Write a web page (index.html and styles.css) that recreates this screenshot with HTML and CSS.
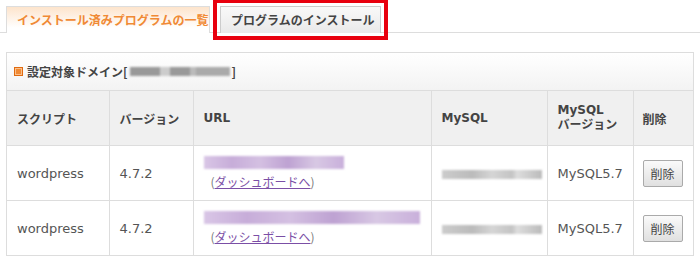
FILE: index.html
```html
<!DOCTYPE html>
<html lang="ja">
<head>
    <meta charset="UTF-8">
    <title>プログラムのインストール</title>
    <link rel="stylesheet" href="styles.css">
</head>
<body>
    <div class="tabs">
        <div class="tab tab-active">インストール済みプログラムの一覧</div>
        <div class="tab tab-other">プログラムのインストール</div>
    </div>

    <div class="panel">
        <div class="panel-head">
            <span class="mark"></span>
            設定対象ドメイン[<span class="blur blur-domain"></span>]
        </div>
        <table class="list">
            <colgroup>
                <col style="width: 102px">
                <col style="width: 84px">
                <col style="width: 238px">
                <col style="width: 116px">
                <col style="width: 86px">
                <col>
            </colgroup>
            <tr>
                <th>スクリプト</th>
                <th>バージョン</th>
                <th>URL</th>
                <th>MySQL</th>
                <th>MySQL<br>バージョン</th>
                <th>削除</th>
            </tr>
            <tr>
                <td>wordpress</td>
                <td>4.7.2</td>
                <td>
                    <span class="blur blur-url" style="width: 140px"></span>
                    <span class="dash">(<a href="#">ダッシュボードへ</a>)</span>
                </td>
                <td><span class="blur blur-db"></span></td>
                <td>MySQL5.7</td>
                <td><button class="del">削除</button></td>
            </tr>
            <tr>
                <td>wordpress</td>
                <td>4.7.2</td>
                <td>
                    <span class="blur blur-url" style="width: 216px"></span>
                    <span class="dash">(<a href="#">ダッシュボードへ</a>)</span>
                </td>
                <td><span class="blur blur-db"></span></td>
                <td>MySQL5.7</td>
                <td><button class="del">削除</button></td>
            </tr>
        </table>
    </div>
</body>
</html>
```

FILE: styles.css
```css
body {
    margin: 0;
    background: #fff;
    font-family: 'DejaVu Sans', 'Noto Sans CJK JP', sans-serif;
    font-size: 12px;
    color: #555;
}

.tabs {
    display: flex;
    gap: 10px;
    padding: 6px 0 0 6px;
    border-bottom: 1px solid #ddd;
    height: 26px;
}

.tab {
    box-sizing: border-box;
    height: 27px;
    line-height: 26px;
    border: 1px solid #ddd;
    border-bottom: none;
    font-family: 'Noto Sans CJK JP', sans-serif;
    font-weight: bold;
    font-size: 12px;
}

.tab-active {
    width: 204px;
    padding-left: 10px;
    color: #f08a35;
    background: linear-gradient(to bottom, #fde4cc, #fff 80%);
}

.tab-other {
    width: 161px;
    padding-left: 10px;
    color: #444;
    background: linear-gradient(to bottom, #f9f9f9, #e9e9e9);
    border-color: #ccc;
    outline: 4px solid #e8000e;
    outline-offset: 3px;
}

.panel {
    margin: 19px 6px 0 6px;
    border: 1px solid #ddd;
}

.panel-head {
    height: 37px;
    padding-left: 7px;
    font-family: 'Noto Sans CJK JP', sans-serif;
    font-weight: bold;
    font-size: 12px;
    color: #444;
    background: linear-gradient(to bottom, #fff, #f3f3f3);
    display: flex;
    align-items: center;
}

.mark {
    display: inline-block;
    width: 7px;
    height: 7px;
    background: #f08a35;
    border: 1px solid #e06a10;
    margin-right: 4px;
    box-shadow: inset 0 0 0 1px #fbc08a;
}

.blur {
    display: inline-block;
    filter: blur(1px);
}

.blur-domain {
    width: 100px;
    height: 9px;
    margin: 0 2px;
    background: linear-gradient(to right, #999 0 30%, #ccc 30% 40%, #999 40% 60%, #bbb 60% 66%, #aaa 66%);
}

.blur-url {
    display: block;
    height: 13px;
    background: linear-gradient(to right, #d9c6e6, #c7add9 20%, #d4c0e2 40%, #bea2d2 60%, #d8c8e4 80%, #c9b0db);
}

.blur-db {
    width: 100px;
    height: 9px;
    margin-top: 6px;
    background: linear-gradient(to right, #ccc, #bbb 30%, #d5d5d5 50%, #c4c4c4 70%, #ddd 75%, #bbb);
}

.list {
    width: 100%;
    border-collapse: collapse;
    table-layout: fixed;
}

.list th,
.list td {
    border: 1px solid #ddd;
    padding: 0 10px;
    text-align: left;
    font-size: 13px;
}

.list tr th:first-child,
.list tr td:first-child {
    border-left: none;
}

.list tr th:last-child,
.list tr td:last-child {
    border-right: none;
    padding-left: 9px;
}

.list tr:last-child td {
    border-bottom: none;
}

.list th {
    height: 54px;
    background: #f0f0f0;
    color: #444;
    font-family: 'Noto Sans CJK JP', sans-serif;
    font-size: 12px;
    font-weight: bold;
    line-height: 15px;
}

.list th:nth-child(3),
.list th:nth-child(4),
.list th:nth-child(5) {
    font-family: 'DejaVu Sans', 'Noto Sans CJK JP', sans-serif;
}

.list td {
    height: 54px;
    color: #555;
}

.dash {
    display: block;
    margin-top: 4px;
    padding-left: 7px;
    font-family: 'Noto Sans CJK JP', sans-serif;
    font-size: 12px;
    color: #777;
}

.dash a {
    color: #7b4fa6;
}

.del {
    font-family: 'Noto Sans CJK JP', sans-serif;
    font-size: 12px;
    color: #444;
    padding: 4px 7px;
    border: 1px solid #aaa;
    border-radius: 2px;
    background: linear-gradient(to bottom, #fafafa, #e0e0e0);
}
```
